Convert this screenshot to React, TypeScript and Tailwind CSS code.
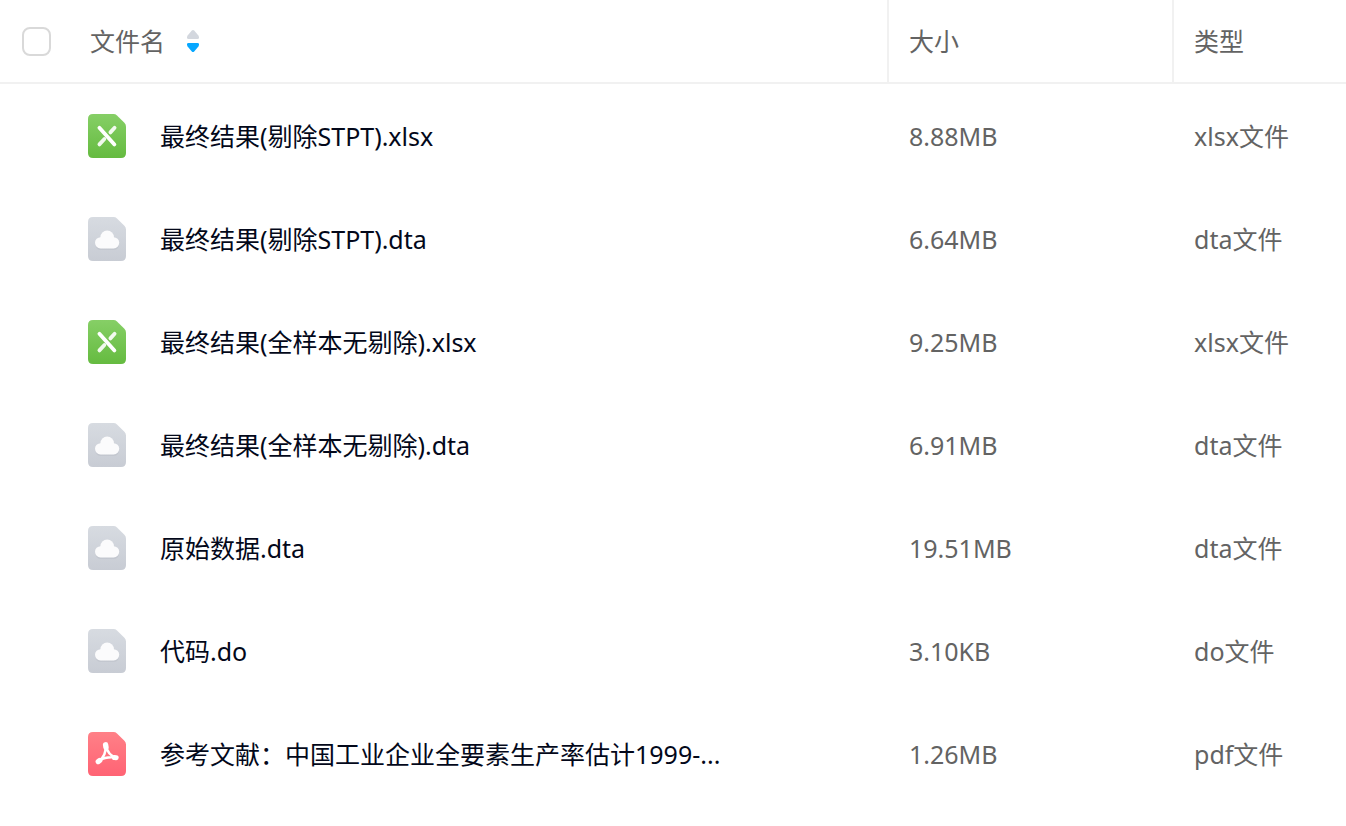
import { useState } from "react";

type IconKind = "excel" | "cloud" | "pdf";

interface FileRow {
  name: string;
  size: string;
  type: string;
  icon: IconKind;
}

const files: FileRow[] = [
  { name: "最终结果(剔除STPT).xlsx", size: "8.88MB", type: "xlsx文件", icon: "excel" },
  { name: "最终结果(剔除STPT).dta", size: "6.64MB", type: "dta文件", icon: "cloud" },
  { name: "最终结果(全样本无剔除).xlsx", size: "9.25MB", type: "xlsx文件", icon: "excel" },
  { name: "最终结果(全样本无剔除).dta", size: "6.91MB", type: "dta文件", icon: "cloud" },
  { name: "原始数据.dta", size: "19.51MB", type: "dta文件", icon: "cloud" },
  { name: "代码.do", size: "3.10KB", type: "do文件", icon: "cloud" },
  { name: "参考文献：中国工业企业全要素生产率估计1999-...", size: "1.26MB", type: "pdf文件", icon: "pdf" },
];

const gradients: Record<IconKind, [string, string]> = {
  excel: ["#86cf66", "#65bb40"],
  cloud: ["#d7dbe1", "#c8ccd4"],
  pdf: ["#ff8087", "#ff6374"],
};

function FileIcon({ kind }: { kind: IconKind }) {
  const [from, to] = gradients[kind];
  return (
    <svg viewBox="0 0 38 44" className="h-11 w-[38px] shrink-0" aria-hidden="true">
      <defs>
        <linearGradient id={`page-${kind}`} x1="0" y1="0" x2="0" y2="1">
          <stop offset="0" stopColor={from} />
          <stop offset="1" stopColor={to} />
        </linearGradient>
      </defs>
      <path
        d="M5 0H25.5Q27.5 0 29 1.4L36.4 8.8Q38 10.4 38 12.5V39Q38 44 33 44H5Q0 44 0 39V5Q0 0 5 0Z"
        fill={`url(#page-${kind})`}
      />
      {kind === "excel" && (
        <g fill="none" stroke="#fff" strokeWidth="3.8" strokeLinecap="round">
          <path d="M11.4 13.8 26.4 30.4" />
          <path d="M26.6 13.8 22.4 18.4" strokeOpacity=".9" />
          <path d="M16.4 25 11.4 30.4" strokeOpacity=".9" />
        </g>
      )}
      {kind === "cloud" && (
        <>
          <rect x="7.5" y="22" width="23.5" height="11" rx="5.5" fill="#aeb4be" fillOpacity=".3" />
          <g fill="#fbfbfc">
            <circle cx="19.2" cy="20.2" r="6.8" />
            <rect x="7" y="20.2" width="24.2" height="11.2" rx="5.6" />
          </g>
        </>
      )}
      {kind === "pdf" && (
        <g fill="none" stroke="#fff" strokeLinecap="round" strokeLinejoin="round">
          <path
            d="M17.6 13C19 19.5 21.5 24 28.3 25.6M17.6 13C18.3 20 15.5 26 10.2 29.8M12 28.4C16 25.6 21.5 24.8 28.3 25.6"
            strokeWidth="2.6"
          />
          <path d="M17.6 12.8 18 15.4" strokeWidth="5.4" />
          <path d="M28.2 25.7 26.4 25.6" strokeWidth="5" />
          <path d="M10.2 29.6 11.8 28.4" strokeWidth="5.2" />
        </g>
      )}
    </svg>
  );
}

function SortArrows({ descending }: { descending: boolean }) {
  return (
    <svg viewBox="0 0 12 22" className="h-[22px] w-3" aria-hidden="true">
      <path
        d="M4.8.6Q6-.6 7.2.6L11.4 5.4Q13 9 10.5 9H1.5Q-1 9 .6 5.4Z"
        fill={descending ? "#d3d7de" : "#06a7ff"}
      />
      <path
        d="M4.8 21.4Q6 22.6 7.2 21.4L11.4 16.6Q13 13 10.5 13H1.5Q-1 13 .6 16.6Z"
        fill={descending ? "#06a7ff" : "#d3d7de"}
      />
    </svg>
  );
}

export default function App() {
  const [descending, setDescending] = useState(true);
  const rows = descending ? files : [...files].reverse();

  return (
    <main className="min-h-screen bg-white font-['Noto_Sans','Noto_Sans_CJK_SC',sans-serif] text-[25px] leading-8 text-[#636363]">
      <table className="w-full table-fixed border-separate border-spacing-0 text-left">
        <colgroup>
          <col className="w-[88px]" />
          <col />
          <col className="w-[285px]" />
          <col className="w-[174px]" />
        </colgroup>
        <thead>
          <tr className="h-21">
            <th className="border-b-2 border-[#f1f1f1] p-0 pl-[22px] font-normal">
              <input
                type="checkbox"
                aria-label="全选"
                className="block size-[29px] appearance-none rounded-lg border-2 border-[#d9d9d9] bg-white checked:border-[#06a7ff] checked:bg-[#06a7ff]"
              />
            </th>
            <th className="border-b-2 border-[#f1f1f1] p-0 font-normal">
              <button
                type="button"
                onClick={() => setDescending(!descending)}
                className="flex items-center gap-[22px] pl-0.5"
              >
                文件名
                <SortArrows descending={descending} />
              </button>
            </th>
            <th className="border-b-2 border-l-2 border-[#f1f1f1] p-0 pl-5 font-normal">大小</th>
            <th className="border-b-2 border-l-2 border-[#f1f1f1] p-0 pl-5 font-normal">类型</th>
          </tr>
        </thead>
        <tbody>
          {rows.map((file) => (
            <tr key={file.name} className="h-[103px]">
              <td className="p-0" />
              <td className="p-0">
                <div className="flex items-center gap-[34px]">
                  <FileIcon kind={file.icon} />
                  <a href="#" className="truncate text-[#03081a]">
                    {file.name}
                  </a>
                </div>
              </td>
              <td className="p-0 pl-[22px]">{file.size}</td>
              <td className="p-0 pl-[22px]">{file.type}</td>
            </tr>
          ))}
        </tbody>
      </table>
    </main>
  );
}
